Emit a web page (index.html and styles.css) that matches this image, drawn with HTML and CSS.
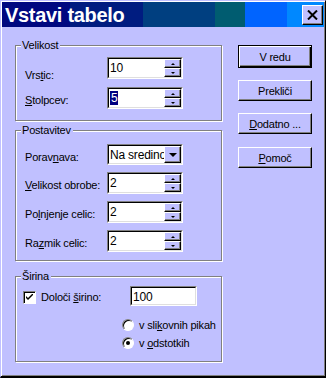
FILE: index.html
```html
<!DOCTYPE html>
<html lang="sl">
<head>
    <meta charset="UTF-8">
    <title>Vstavi tabelo</title>
    <link rel="stylesheet" href="styles.css">
</head>
<body>
    <div class="window">
        <div class="titlebar">
            <span class="title">Vstavi tabelo</span>
            <button class="close" type="button">
                <svg width="11" height="10" viewBox="0 0 11 10"><path d="M1 0.5 L10 9.5 M10 0.5 L1 9.5" stroke="#000" stroke-width="2" fill="none"/></svg>
            </button>
        </div>

        <div class="content">
            <div class="groups">
                <!-- Velikost -->
                <fieldset class="group">
                    <legend>Velikost</legend>
                    <div class="rows rows-size">
                        <div class="row">
                            <label class="lbl lbl-low">Vrs<u>t</u>ic:</label>
                            <span class="field">
                                <span class="field-in">
                                    <span class="value">10</span>
                                    <span class="arrows"><span class="arrow up"></span><span class="arrow down"></span></span>
                                </span>
                            </span>
                        </div>
                        <div class="row">
                            <label class="lbl"><u>S</u>tolpcev:</label>
                            <span class="field">
                                <span class="field-in">
                                    <span class="value"><span class="sel">5</span></span>
                                    <span class="arrows"><span class="arrow up"></span><span class="arrow down"></span></span>
                                </span>
                            </span>
                        </div>
                    </div>
                </fieldset>

                <!-- Postavitev -->
                <fieldset class="group group-layout">
                    <legend>Postavitev</legend>
                    <div class="rows rows-layout">
                        <div class="row row-select">
                            <label class="lbl">Porav<u>n</u>ava:</label>
                            <span class="field">
                                <span class="field-in">
                                    <span class="value">Na sredino</span>
                                    <span class="drop"></span>
                                </span>
                            </span>
                        </div>
                        <div class="row">
                            <label class="lbl"><u>V</u>elikost obrobe:</label>
                            <span class="field">
                                <span class="field-in">
                                    <span class="value">2</span>
                                    <span class="arrows"><span class="arrow up"></span><span class="arrow down"></span></span>
                                </span>
                            </span>
                        </div>
                        <div class="row">
                            <label class="lbl">Po<u>l</u>njenje celic:</label>
                            <span class="field">
                                <span class="field-in">
                                    <span class="value">2</span>
                                    <span class="arrows"><span class="arrow up"></span><span class="arrow down"></span></span>
                                </span>
                            </span>
                        </div>
                        <div class="row">
                            <label class="lbl">Ra<u>z</u>mik celic:</label>
                            <span class="field">
                                <span class="field-in">
                                    <span class="value">2</span>
                                    <span class="arrows"><span class="arrow up"></span><span class="arrow down"></span></span>
                                </span>
                            </span>
                        </div>
                    </div>
                </fieldset>

                <!-- Širina -->
                <fieldset class="group group-width">
                    <legend>Širina</legend>
                    <div class="rows rows-width">
                        <div class="row row-check">
                            <span class="check">
                                <svg width="7" height="7" viewBox="0 0 7 7"><path d="M0 2 L0 4 L2 6 L7 1 L7 -1 L2 4 Z" fill="#000"/></svg>
                            </span>
                            <label class="lbl lbl-check">Določi <u>š</u>irino:</label>
                            <span class="field field-text">
                                <span class="field-in"><span class="value">100</span></span>
                            </span>
                        </div>
                        <div class="radios">
                            <div class="radio-row"><span class="radio"></span><span>v sli<u>k</u>ovnih pikah</span></div>
                            <div class="radio-row"><span class="radio on"></span><span>v <u>o</u>dstotkih</span></div>
                        </div>
                    </div>
                </fieldset>
            </div>

            <div class="buttons">
                <button class="btn btn-default" type="button">V redu</button>
                <button class="btn" type="button">Prekliči</button>
                <button class="btn" type="button"><u>D</u>odatno ...</button>
                <button class="btn btn-last" type="button"><u>P</u>omoč</button>
            </div>
        </div>
    </div>
</body>
</html>
```

FILE: styles.css
```css
* {
    margin: 0;
    padding: 0;
    box-sizing: border-box;
}

body {
    background: #c0c0ff;
    font-family: 'Liberation Sans', Arial, sans-serif;
    font-size: 11px;
    letter-spacing: -0.2px;
    color: #000;
}

.window {
    width: 326px;
    height: 378px;
    padding: 1px;
    background: #c0c0ff;
    border-top: 1px solid #c0c0ff;
    border-left: 1px solid #c0c0ff;
    border-right: 1px solid #000;
    border-bottom: 2px solid #000;
    box-shadow: inset 1px 1px 0 #fff, inset -1px -1px 0 #808080;
}

/* title bar with the stepped gradient */
.titlebar {
    height: 25px;
    display: flex;
    align-items: center;
    justify-content: space-between;
    padding: 1px 1px 0 3px;
    background: linear-gradient(to right,
        #000880 0 68px,
        #001c80 68px 141px,
        #003f80 141px 213px,
        #005c70 213px 243px,
        #0064ff 243px 285px,
        #0088ff 285px);
}

.title {
    color: #fff;
    font-weight: bold;
    font-size: 20px;
    letter-spacing: -0.3px;
    line-height: 22px;
}

.close {
    width: 21px;
    height: 20px;
    display: flex;
    align-items: center;
    justify-content: center;
    background: #c0c0ff;
    border: 1px solid;
    border-color: #fff #000 #000 #fff;
    box-shadow: inset -1px -1px 0 #808080;
}

.content {
    display: flex;
    padding: 12px 0 0 13px;
}

.groups {
    width: 207px;
    display: flex;
    flex-direction: column;
}

/* etched group boxes */
.group {
    min-width: 0;
    border: 1px solid #808080;
    box-shadow: 1px 1px 0 #fff, inset 1px 1px 0 #fff;
}

.group legend {
    margin-left: 5px;
    padding: 0 2px 0 1px;
    line-height: 13px;
    background: #c0c0ff;
}

.group-layout {
    margin-top: 3px;
}

.group-width {
    margin-top: 9px;
}

.rows {
    display: flex;
    flex-direction: column;
}

.rows-size {
    padding: 5px 0 11px 9px;
    gap: 8px;
}

.rows-layout {
    padding: 7px 0 8px 9px;
    gap: 7px;
}

.rows-width {
    padding: 3px 0 9px 7px;
}

.row {
    display: flex;
    align-items: center;
    height: 22px;
}

.row-select {
    height: 21px;
}

.lbl {
    flex: 0 0 82px;
    padding-top: 4px;
    white-space: nowrap;
}

.lbl-low {
    padding-top: 14px;
}

/* sunken fields */
.field {
    width: 76px;
    height: 100%;
    flex-shrink: 0;
    border: 1px solid;
    border-color: #808080 #fff #fff #808080;
}

.field-in {
    display: flex;
    height: 100%;
    background: #fff;
    border: 1px solid;
    border-color: #000 #dfdfdf #dfdfdf #000;
    overflow: hidden;
}

.value {
    flex: 1;
    min-width: 0;
    padding-left: 1px;
    font-size: 12px;
    line-height: 18px;
    white-space: nowrap;
    overflow: hidden;
}

.sel {
    background: #000080;
    color: #fff;
    padding: 0 1px;
}

.arrows {
    flex: 0 0 17px;
    display: flex;
    flex-direction: column;
}

.arrow {
    flex: 1;
    display: flex;
    align-items: center;
    justify-content: center;
    background: #c0c0ff;
    border: 1px solid;
    border-color: #fff #000 #000 #fff;
    box-shadow: inset -1px -1px 0 #808080;
}

.arrow::after {
    content: "";
    border-left: 2px solid transparent;
    border-right: 2px solid transparent;
}

.arrow.up::after {
    border-bottom: 2px solid #000;
}

.arrow.down::after {
    border-top: 2px solid #000;
}

.drop {
    flex: 0 0 17px;
    display: flex;
    align-items: center;
    justify-content: center;
    background: #c0c0ff;
    border: 1px solid;
    border-color: #fff #000 #000 #fff;
    box-shadow: inset -1px -1px 0 #808080;
}

.drop::after {
    content: "";
    border-left: 4px solid transparent;
    border-right: 4px solid transparent;
    border-top: 4px solid #000;
}

/* Širina */
.row-check {
    height: 20px;
}

.check {
    width: 13px;
    height: 13px;
    margin-top: 3px;
    flex-shrink: 0;
    display: flex;
    align-items: center;
    justify-content: center;
    background: #fff;
    border: 1px solid;
    border-color: #808080 #fff #fff #808080;
    box-shadow: inset 1px 1px 0 #000;
}

.lbl-check {
    flex: 0 0 89px;
    margin-left: 5px;
    padding-top: 2px;
}

.field-text {
    width: 67px;
}

.radios {
    margin-top: 10px;
    margin-left: 99px;
}

.radio-row {
    height: 18px;
    display: flex;
    align-items: center;
    gap: 5px;
    white-space: nowrap;
}

.radio {
    width: 12px;
    height: 12px;
    flex-shrink: 0;
    border-radius: 50%;
    background: #fff;
    border: 1px solid;
    border-color: #808080 #fff #fff #808080;
    box-shadow: inset 1px 1px 0 #000;
    display: flex;
    align-items: center;
    justify-content: center;
}

.radio.on::after {
    content: "";
    width: 4px;
    height: 4px;
    border-radius: 50%;
    background: #000;
}

/* command buttons */
.buttons {
    width: 74px;
    margin: 6px 0 0 16px;
    display: flex;
    flex-direction: column;
    gap: 12px;
}

.btn {
    height: 21px;
    font-family: 'Liberation Sans', Arial, sans-serif;
    font-size: 11px;
    letter-spacing: -0.2px;
    color: #000;
    background: #c0c0ff;
    border: 1px solid;
    border-color: #fff #000 #000 #fff;
    box-shadow: inset -1px -1px 0 #808080;
}

.btn-default {
    height: 23px;
    border-color: #000;
    box-shadow: inset 1px 1px 0 #fff, inset -1px -1px 0 #000, inset -2px -2px 0 #808080;
}

.btn-last {
    margin-top: 1px;
}
```
